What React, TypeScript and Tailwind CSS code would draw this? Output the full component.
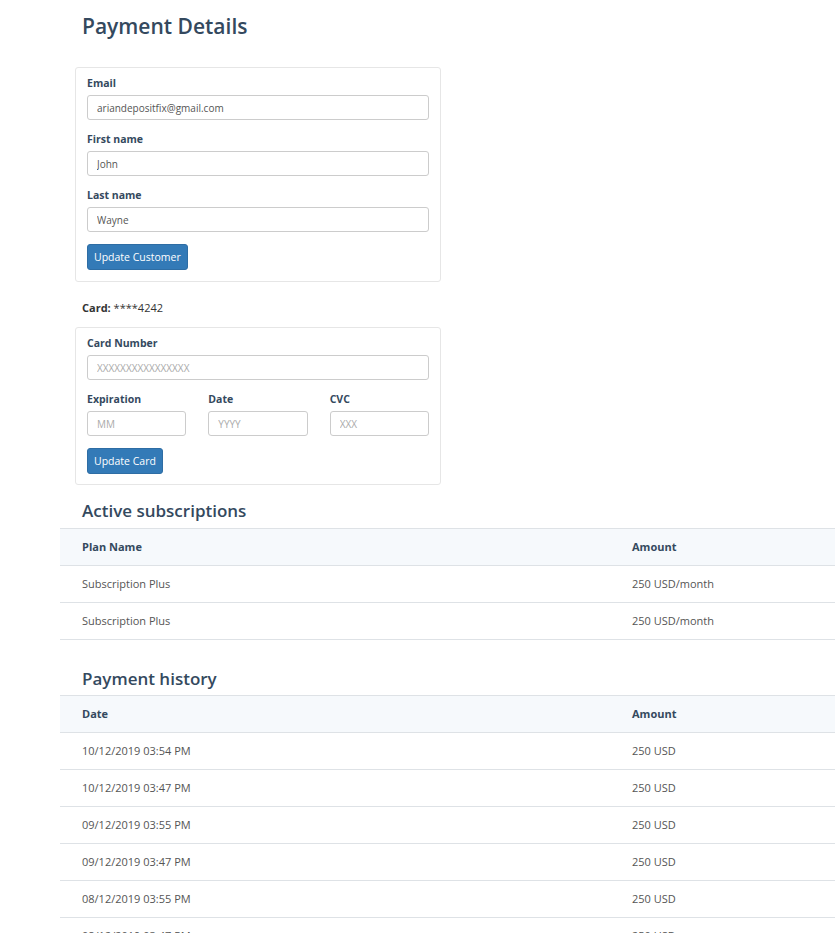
import React from 'react';

const subscriptions = [
  { plan: 'Subscription Plus', amount: '250 USD/month' },
  { plan: 'Subscription Plus', amount: '250 USD/month' },
];

const payments = [
  { date: '10/12/2019 03:54 PM', amount: '250 USD' },
  { date: '10/12/2019 03:47 PM', amount: '250 USD' },
  { date: '09/12/2019 03:55 PM', amount: '250 USD' },
  { date: '09/12/2019 03:47 PM', amount: '250 USD' },
  { date: '08/12/2019 03:55 PM', amount: '250 USD' },
  { date: '08/12/2019 03:47 PM', amount: '250 USD' },
];

function Field({ label, value, placeholder }: { label: string; value?: string; placeholder?: string }) {
  return (
    <div className="flex flex-col">
      <label className="text-[10.5px] font-bold text-[#34495e] leading-[14px] mb-[5px]">{label}</label>
      <input
        readOnly
        value={value ?? ''}
        placeholder={placeholder}
        className="h-[25px] w-full rounded-[3px] border border-[#cccccc] px-[9px] text-[10px] text-[#555555] placeholder:text-[#aaaaaa] outline-none"
      />
    </div>
  );
}

function Button({ children }: { children: React.ReactNode }) {
  return (
    <button className="h-[26px] self-start rounded-[3px] border border-[#2e6da4] bg-[#337ab7] px-[6px] text-[10.5px] text-white leading-none">
      {children}
    </button>
  );
}

function Table({ headers, rows }: { headers: [string, string]; rows: [string, string][] }) {
  return (
    <table className="w-[1100px] border-collapse text-[11px]">
      <thead>
        <tr className="bg-[#f6f9fc] border-y border-[#dee2e6]">
          <th className="w-[572px] h-[37px] pl-[22px] text-left font-bold text-[#34495e]">{headers[0]}</th>
          <th className="h-[37px] text-left font-bold text-[#34495e]">{headers[1]}</th>
        </tr>
      </thead>
      <tbody>
        {rows.map((r, i) => (
          <tr key={i} className="border-b border-[#dee2e6]">
            <td className="h-[37px] pl-[22px] text-[#555555]">{r[0]}</td>
            <td className="h-[37px] text-[#555555]">{r[1]}</td>
          </tr>
        ))}
      </tbody>
    </table>
  );
}

export default function App() {
  return (
    <div className="h-[933px] overflow-hidden bg-white font-['Open_Sans',sans-serif]">
      <div className="pl-[60px]">
        {/* Header */}
        <h1 className="pl-[22px] pt-[11px] text-[21px] font-semibold leading-[30px] text-[#34495e]">Payment Details</h1>

        {/* Customer form */}
        <div className="ml-[15px] mt-[26px] w-[366px] rounded-[3px] border border-[#e6e6e6] px-[11px] pt-[8px] pb-[11px] flex flex-col gap-[12px]">
          <Field label="Email" value="ariandepositfix@gmail.com" />
          <Field label="First name" value="John" />
          <Field label="Last name" value="Wayne" />
          <Button>Update Customer</Button>
        </div>

        <p className="pl-[22px] mt-[18px] text-[11px] leading-[15px] text-[#333333]">
          <span className="font-bold">Card:</span> ****4242
        </p>

        {/* Card form */}
        <div className="ml-[15px] mt-[12px] w-[366px] rounded-[3px] border border-[#e6e6e6] px-[11px] pt-[8px] pb-[10px] flex flex-col gap-[12px]">
          <Field label="Card Number" placeholder="XXXXXXXXXXXXXXXX" />
          <div className="grid grid-cols-3 gap-x-[22px]">
            <Field label="Expiration" placeholder="MM" />
            <Field label="Date" placeholder="YYYY" />
            <Field label="CVC" placeholder="XXX" />
          </div>
          <Button>Update Card</Button>
        </div>

        <h2 className="pl-[22px] mt-[14px] mb-[5px] text-[17px] font-semibold leading-[24px] text-[#34495e]">Active subscriptions</h2>
        <Table headers={['Plan Name', 'Amount']} rows={subscriptions.map((s) => [s.plan, s.amount])} />

        <h2 className="pl-[22px] mt-[27px] mb-[4px] text-[17px] font-semibold leading-[24px] text-[#34495e]">Payment history</h2>
        <Table headers={['Date', 'Amount']} rows={payments.map((p) => [p.date, p.amount])} />
      </div>
    </div>
  );
}
